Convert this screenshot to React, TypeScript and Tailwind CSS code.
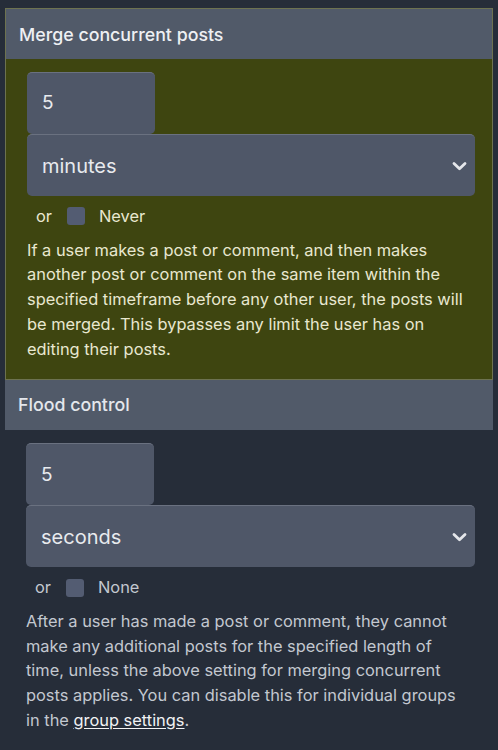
import React from 'react';

function Chevron() {
  return (
    <svg width="17" height="16" viewBox="0 0 17 16" className="text-gray-200">
      <path d="M3 5.5 L8.5 10.8 L14 5.5" fill="none" stroke="currentColor" strokeWidth="2.8" strokeLinecap="round" strokeLinejoin="round" />
    </svg>
  );
}

interface TimeSettingProps {
  value: string;
  unit: string;
  optionLabel: string;
  children?: React.ReactNode;
}

function TimeSetting({ value, unit, optionLabel, children }: TimeSettingProps) {
  return (
    <div>
      <div className="flex h-[62px] w-[128px] items-center rounded-[5px] border-t border-[#6a7180] bg-[#4f5768] pl-[15px] text-[19px] text-[#e8eaee]">
        {value}
      </div>
      <div className="flex h-[62px] items-center justify-between rounded-[5px] border-t border-[#6a7180] bg-[#4f5768] pl-[15px] pr-[7px] text-[20px] text-[#e8eaee]">
        <span>{unit}</span>
        <Chevron />
      </div>
      <div className="mt-[8px] flex items-center pl-[9px] text-[16.4px]">
        <span>or</span>
        <span className="ml-[15px] h-[18px] w-[18px] rounded-[3px] bg-[#535c72]"></span>
        <span className="ml-[14px]">{optionLabel}</span>
      </div>
      {children}
    </div>
  );
}

export default function App() {
  return (
    <div className="min-h-[750px] bg-[#262d39] pt-[8px] font-['Inter',sans-serif]">
      {/* Merge concurrent posts (highlighted) */}
      <div className="mx-[5px] border border-[#6d7250]">
        <div className="flex h-[50px] items-center bg-[#515a69] pl-[13px] pt-[2px] text-[17.8px] font-medium text-[#eef0f3]">
          Merge concurrent posts
        </div>
        <div className="bg-[#3e4510] pb-[18px] pl-[21px] pr-[17px] pt-[13px] text-[#e9e8d0]">
          <TimeSetting value="5" unit="minutes" optionLabel="Never">
            <p className="mt-[9px] text-[16.4px] leading-[24.75px]">
              If a user makes a post or comment, and then makes another post or comment on the same item within the specified timeframe before any other user, the posts will be merged. This bypasses any limit the user has on editing their posts.
            </p>
          </TimeSetting>
        </div>
      </div>

      {/* Flood control */}
      <div className="mx-[5px] flex h-[50px] items-center bg-[#515a69] pl-[13px] text-[17.8px] font-medium text-[#e4e7ec]">
        Flood control
      </div>
      <div className="pb-[20px] pl-[26px] pr-[23px] pt-[13px] text-[#c3c8d0]">
        <TimeSetting value="5" unit="seconds" optionLabel="None">
          <p className="mt-[9px] pr-[12px] text-[16.4px] leading-[24.75px]">
            After a user has made a post or comment, they cannot make any additional posts for the specified length of time, unless the above setting for merging concurrent posts applies. You can disable this for individual groups in the{' '}
            <a href="#" className="text-[#f1f2f4] underline underline-offset-2">group settings</a>.
          </p>
        </TimeSetting>
      </div>
    </div>
  );
}
